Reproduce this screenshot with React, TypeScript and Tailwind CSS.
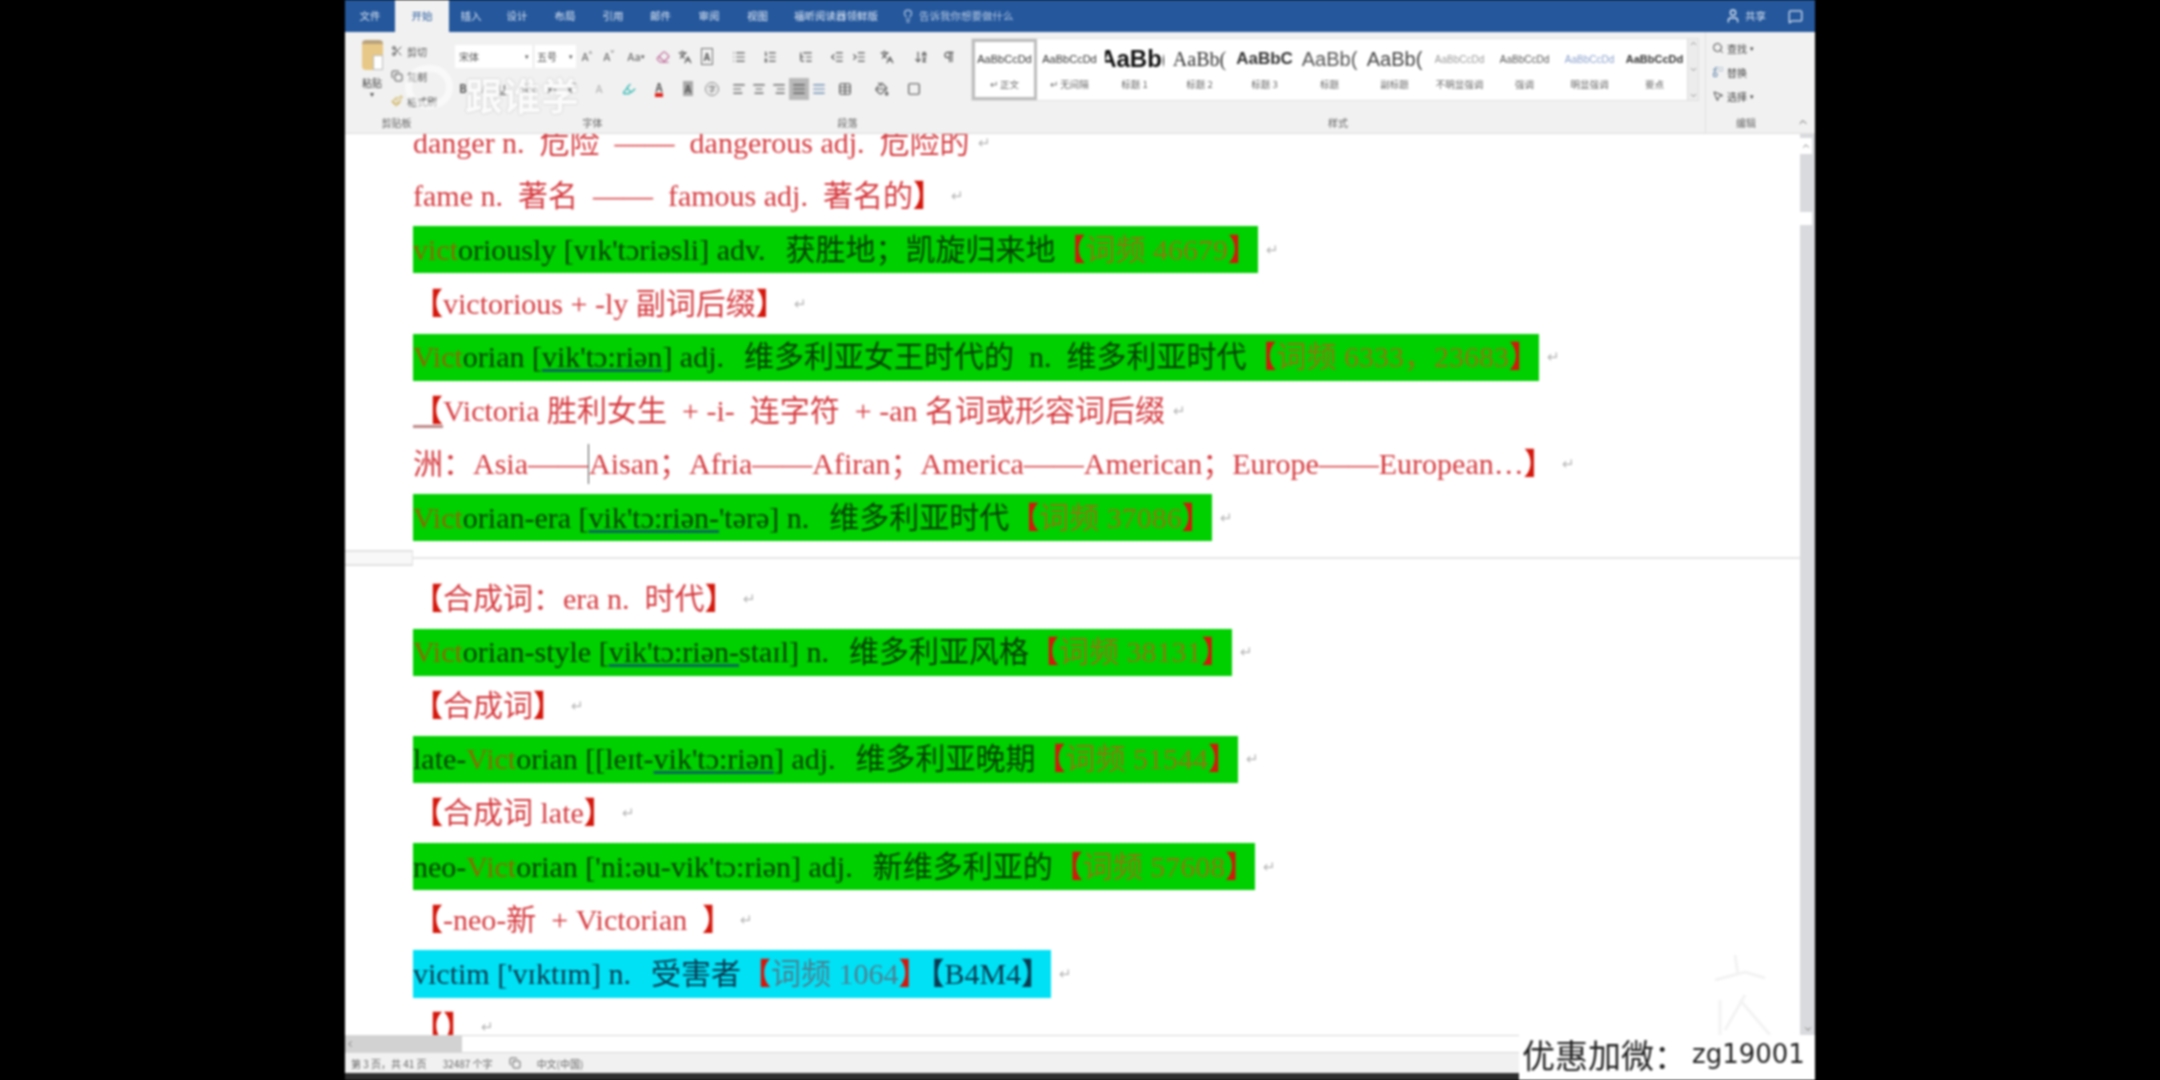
import React from "react";
import { Scissors, Copy, Paintbrush, Search, Lightbulb, User, MessageSquare, ChevronUp, ChevronDown, ChevronLeft, Replace, MousePointer2, List, ListOrdered, ListTree, Indent, Outdent, AlignLeft, AlignCenter, AlignRight, AlignJustify, Table, Languages, ArrowDownAZ, Pilcrow, Highlighter, Eraser, PaintBucket, Square } from "lucide-react";

const Br = ({ c }: { c: string }) => <span className="text-[#d5170c] font-bold">{c}</span>;
const Freq = ({ n, cyan }: { n: string; cyan?: boolean }) => (
  <>
    <Br c="【" />
    <span className={cyan ? "text-[#4d7f92]" : "text-[#8a7c0c]"}>词频 {n}</span>
    <Br c="】" />
  </>
);
const Vict = ({ t }: { t: string }) => <span className="text-[#8d6a00]">{t}</span>;
const Ipa = ({ t }: { t: string }) => <span className="underline decoration-[#0a6a58] underline-offset-2">{t}</span>;
const Mark = () => <span className="text-[#b5b5b5] text-[15px] ml-2">↵</span>;
const Gap = () => <span className="w-[5px] shrink-0" />;

const Row = ({ children }: { children: React.ReactNode }) => (
  <div className="h-[53.6px] shrink-0 flex items-center pl-[68px] whitespace-pre text-[#d63b40]">{children}</div>
);
const Bar = ({ children, cyan }: { children: React.ReactNode; cyan?: boolean }) => (
  <Row>
    <div className={cyan ? "h-[48px] flex items-center bg-[#00e1f5] text-[#0c3a50]" : "h-[47px] flex items-center bg-[#00cf00] text-[#064006]"}>{children}</div>
    <Mark />
  </Row>
);

const tabs = [
  ["文件", "w-[50px]"], ["开始", "w-[54px]"], ["插入", "w-[44px]"], ["设计", "w-[48px]"], ["布局", "w-[48px]"], ["引用", "w-[48px]"],
  ["邮件", "w-[47px]"], ["审阅", "w-[50px]"], ["视图", "w-[47px]"], ["福昕阅读器领鲜版", "w-[110px]"],
];

const styles: [string, string, string][] = [
  ["AaBbCcDd", "text-[11px] text-[#333]", "↵ 正文"],
  ["AaBbCcDd", "text-[11px] text-[#333]", "↵ 无间隔"],
  ["AaBb(", "text-[24px] font-bold text-[#111]", "标题 1"],
  ["AaBb(", "text-[20px] text-[#333] font-['Liberation_Serif',serif]", "标题 2"],
  ["AaBbC", "text-[17px] font-bold text-[#333]", "标题 3"],
  ["AaBb(", "text-[20px] text-[#555]", "标题"],
  ["AaBb(", "text-[20px] text-[#444]", "副标题"],
  ["AaBbCcDd", "text-[10px] text-[#999]", "不明显强调"],
  ["AaBbCcDd", "text-[10px] text-[#555]", "强调"],
  ["AaBbCcDd", "text-[10px] text-[#8aa0cc]", "明显强调"],
  ["AaBbCcDd", "text-[11px] font-bold text-[#333]", "要点"],
];

const GroupLabel = ({ t }: { t: string }) => (
  <div className="h-[22px] flex items-center justify-center text-[10px] text-[#666]">{t}</div>
);
const Slot = ({ children, w = "w-[22px]" }: { children: React.ReactNode; w?: string }) => (
  <div className={`${w} h-[22px] flex items-center justify-center text-[11px] text-[#555] shrink-0`}>{children}</div>
);
const I = 14;

function Ribbon() {
  return (
    <div className="h-[102px] shrink-0 flex bg-[#f1f1f1] border-b border-[#dedede] text-[#555] font-['Noto_Sans_CJK_SC',sans-serif]">
      {/* clipboard */}
      <div className="w-[103px] shrink-0 flex flex-col">
        <div className="flex-1 flex pl-[10px] pt-[8px]">
          <div className="w-[34px] flex flex-col items-center">
            <div className="w-[21px] h-[30px] bg-[#e8c887] rounded-sm border-t-4 border-[#b9a27c] flex items-end justify-end">
              <div className="w-[10px] h-[15px] bg-white border border-[#bbb]" />
            </div>
            <div className="text-[10px] mt-[5px] text-[#444]">粘贴</div>
            <div className="text-[8px] leading-[8px]">▾</div>
          </div>
          <div className="flex flex-col gap-[3px] pl-[2px] text-[10px]">
            <div className="h-[22px] flex items-center gap-1"><Scissors size={12} />剪切</div>
            <div className="h-[22px] flex items-center gap-1"><Copy size={12} />复制</div>
            <div className="h-[22px] flex items-center gap-1"><Paintbrush size={12} className="text-[#c9a53c]" />格式刷</div>
          </div>
        </div>
        <GroupLabel t="剪贴板" />
      </div>
      {/* font */}
      <div className="w-[282px] shrink-0 flex flex-col pl-[7px]">
        <div className="flex-1 pt-[13px] flex flex-col gap-[2px]">
          <div className="flex items-center h-[23px]">
            <div className="w-[78px] h-[23px] bg-white text-[10px] flex items-center justify-between px-[4px]">宋体<span className="text-[7px]">▾</span></div>
            <div className="w-[43px] h-[23px] bg-white border-l border-[#ddd] text-[10px] flex items-center justify-between px-[3px]">五号<span className="text-[7px]">▾</span></div>
            <Slot>A<sup className="text-[7px]">^</sup></Slot>
            <Slot>A<sup className="text-[7px]">ˇ</sup></Slot>
            <Slot w="w-[32px]">Aa<span className="text-[7px]">▾</span></Slot>
            <Slot><Eraser size={I} className="text-[#c06a9a]" /></Slot>
            <Slot><Languages size={I} /></Slot>
            <Slot><span className="border border-[#777] px-[2px] text-[10px] font-bold">A</span></Slot>
          </div>
          <div className="flex items-center h-[23px] pt-[14px]">
            <Slot w="w-[16px]"><b>B</b></Slot>
            <Slot><i>I</i></Slot>
            <Slot w="w-[18px]"><u>U</u></Slot>
            <Slot w="w-[34px]"><s>abc</s></Slot>
            <Slot w="w-[14px]">x₂</Slot>
            <Slot w="w-[26px]">x²</Slot>
            <Slot w="w-[28px]"><span className="text-[#aaa]">A</span></Slot>
            <Slot w="w-[32px]"><Highlighter size={I} className="text-[#1bb3ad]" /></Slot>
            <Slot w="w-[28px]"><span className="font-bold border-b-4 border-[#e0261e] leading-[12px] text-[#555]">A</span></Slot>
            <Slot w="w-[30px]"><span className="bg-[#aaa] px-[2px] text-[10px] font-bold">A</span></Slot>
            <Slot w="w-[18px]"><span className="rounded-full border border-[#888] w-[14px] h-[14px] text-[8px] flex items-center justify-center shrink-0">字</span></Slot>
          </div>
        </div>
        <GroupLabel t="字体" />
      </div>
      {/* paragraph */}
      <div className="w-[235px] shrink-0 flex flex-col">
        <div className="flex-1 pt-[13px] flex flex-col gap-[2px]">
          <div className="flex items-center h-[23px] -ml-[6px]">
            <Slot w="w-[30px]"><List size={I} /></Slot>
            <Slot w="w-[32px]"><ListOrdered size={I} /></Slot>
            <Slot w="w-[40px]"><ListTree size={I} /></Slot>
            <Slot><Outdent size={I} /></Slot>
            <Slot><Indent size={I} /></Slot>
            <Slot w="w-[34px]"><Languages size={I} /></Slot>
            <Slot w="w-[34px]"><ArrowDownAZ size={I} /></Slot>
            <Slot><Pilcrow size={I} /></Slot>
          </div>
          <div className="flex items-center h-[23px] pt-[14px] -ml-[1px]">
            <Slot w="w-[20px]"><AlignLeft size={I} /></Slot>
            <Slot w="w-[20px]"><AlignCenter size={I} /></Slot>
            <Slot w="w-[20px]"><AlignRight size={I} /></Slot>
            <Slot w="w-[20px]"><div className="w-[20px] h-[22px] bg-[#b9b9b9] flex items-center justify-center"><AlignJustify size={I} /></div></Slot>
            <Slot w="w-[20px]"><AlignJustify size={I} className="text-[#5a7fa8]" /></Slot>
            <Slot w="w-[32px]"><Table size={I} /></Slot>
            <Slot w="w-[42px]"><PaintBucket size={I} /></Slot>
            <Slot><Square size={I} /></Slot>
          </div>
        </div>
        <GroupLabel t="段落" />
      </div>
      {/* styles */}
      <div className="w-[740px] shrink-0 flex flex-col pl-[6px]">
        <div className="h-[63px] mt-[6px] w-[728px] bg-white border border-[#e0e0e0] flex">
          {styles.map(([s, cls, l], i) => (
            <div key={i} className={i === 0 ? "w-[65px] shrink-0 border-[3px] border-[#bdbdbd] flex flex-col items-center overflow-hidden" : "w-[65px] shrink-0 border-[3px] border-white flex flex-col items-center overflow-hidden"}>
              <div className={`h-[34px] flex items-center whitespace-nowrap font-['Liberation_Sans',sans-serif] ${cls}`}>{s}</div>
              <div className="text-[9.5px] text-[#666] mt-[1px] whitespace-nowrap">{l}</div>
            </div>
          ))}
          <div className="flex-1 ml-auto border-l border-[#ddd] flex flex-col items-center justify-between text-[#777] bg-[#ececec]">
            <ChevronUp size={9} />
            <ChevronDown size={9} />
            <ChevronDown size={9} />
          </div>
        </div>
        <div className="flex-1 flex items-end"><div className="w-full"><GroupLabel t="样式" /></div></div>
      </div>
      {/* edit */}
      <div className="flex-1 flex flex-col border-l border-[#e0e0e0]">
        <div className="flex-1 pt-[4px] pl-[6px] flex flex-col text-[10px] text-[#444]">
          <div className="h-[24px] flex items-center gap-[3px]"><Search size={12} />查找 <span className="text-[7px]">▾</span></div>
          <div className="h-[24px] flex items-center gap-[3px]"><Replace size={12} className="text-[#5a7fa8]" />替换</div>
          <div className="h-[24px] flex items-center gap-[3px]"><MousePointer2 size={12} />选择 <span className="text-[7px]">▾</span></div>
        </div>
        <div className="h-[22px] flex items-center text-[10px] text-[#666] pl-[30px] justify-between pr-[6px]">编辑<ChevronUp size={12} /></div>
      </div>
    </div>
  );
}

export default function App() {
  return (
    <div className="w-[2160px] h-[1080px] bg-black flex justify-center overflow-hidden">
      <div className="relative w-[1470px] h-[1080px] flex flex-col bg-white blur-[0.9px]">
        {/* title bar */}
        <div className="h-[32px] shrink-0 bg-[#24579c] flex items-stretch text-[10.5px] text-[#dbe5f3] font-['Noto_Sans_CJK_SC',sans-serif]">
          {tabs.map(([t, w]) => (
            <div key={t} className={t === "开始" ? `${w} shrink-0 flex items-center justify-center bg-[#f1f1f1] text-[#24579c]` : `${w} shrink-0 flex items-center justify-center`}>{t}</div>
          ))}
          <div className="flex items-center gap-[4px] pl-[10px] text-[#b5c8e3]"><Lightbulb size={14} />告诉我你想要做什么</div>
          <div className="ml-auto flex items-center gap-[22px] pr-[12px]">
            <div className="flex items-center gap-[4px]"><User size={16} />共享</div>
            <MessageSquare size={15} />
          </div>
        </div>
        <Ribbon />
        {/* document */}
        <div className="flex-1 min-h-0 flex bg-white">
          <div className="flex-1 min-w-0 overflow-hidden font-['Liberation_Serif','Noto_Sans_CJK_SC',serif] text-[30px] leading-[40px]">
            <div className="-mt-[18px] flex flex-col">
              <Row>danger n.  危险  ——  dangerous adj.  危险的<Mark /></Row>
              <Row>fame n.  著名  ——  famous adj.  著名的<Br c="】" /><Mark /></Row>
              <Bar><Vict t="vict" />oriously [vɪk'tɔriəsli] adv.  <Gap />获胜地；凯旋归来地<Freq n="46679" /></Bar>
              <Row><Br c="【" />victorious + -ly 副词后缀<Br c="】" /><Mark /></Row>
              <Bar><Vict t="Vict" />orian [<Ipa t="vik'tɔ:riən" />] adj.  <Gap />维多利亚女王时代的  n.  维多利亚时代<Freq n="6333，23683" /></Bar>
              <Row><span className="underline decoration-[#c08a8a] underline-offset-4"><Br c="【" /></span>Victoria 胜利女生  + -i-  连字符  + -an 名词或形容词后缀<Mark /></Row>
              <Row>洲：Asia——<span className="border-l border-[#555]">Aisan</span>；Afria——Afiran；America——American；Europe——European…<Br c="】" /><Mark /></Row>
              <Bar><Vict t="Vict" />orian-era [<Ipa t="vik'tɔ:riən-" />'tərə] n.  <Gap />维多利亚时代<Freq n="37086" /></Bar>
              <div className="h-[27px] shrink-0 flex items-center">
                <div className="w-[68px] h-[16px] border-y-2 border-r border-[#e2e2e2] bg-[#f8f8f8]" />
                <div className="flex-1 h-[2px] bg-[#e6e6e6]" />
              </div>
              <Row><Br c="【" />合成词：era n.  时代<Br c="】" /><Mark /></Row>
              <Bar><Vict t="Vict" />orian-style [<Ipa t="vik'tɔ:riən-" />staɪl] n.  <Gap />维多利亚风格<Freq n="38131" /></Bar>
              <Row><Br c="【" />合成词<Br c="】" /><Mark /></Row>
              <Bar>late-<Vict t="Vict" />orian [[leɪt-<Ipa t="vik'tɔ:riən" />] adj.  <Gap />维多利亚晚期<Freq n="51544" /></Bar>
              <Row><Br c="【" />合成词 late<Br c="】" /><Mark /></Row>
              <Bar>neo-<Vict t="Vict" />orian ['ni:əu-vik'tɔ:riən] adj.  <Gap />新维多利亚的<Freq n="57608" /></Bar>
              <Row><Br c="【" />-neo-新  + Victorian  <Br c="】" /><Mark /></Row>
              <Bar cyan>victim ['vɪktɪm] n.  <Gap />受害者<Freq n="1064" cyan /><span className="font-bold -ml-[14px]">【</span>B4M4<span className="font-bold">】</span></Bar>
              <Row><Br c="【" /><Br c="】" /><Mark /></Row>
            </div>
          </div>
          {/* vertical scrollbar */}
          <div className="w-[15px] shrink-0 flex flex-col bg-[#d9dadd]">
            <div className="h-[16px] mt-[4px] mr-[3px] bg-white flex items-center justify-center text-[#666]"><ChevronUp size={10} /></div>
            <div className="h-[13px] mt-[58px] mr-[3px] bg-white" />
            <div className="flex-1" />
            <div className="h-[12px] flex items-center justify-center text-[#666]"><ChevronDown size={10} /></div>
          </div>
        </div>
        {/* horizontal scrollbar */}
        <div className="h-[18px] shrink-0 flex bg-white border-t border-[#d8d8d8] border-b">
          <div className="w-[117px] bg-[#d2d2d2] flex items-center text-[#666]"><ChevronLeft size={10} /></div>
        </div>
        {/* status bar */}
        <div className="h-[20px] shrink-0 bg-[#f1f1f1] flex items-center gap-[16px] pl-[6px] text-[10px] text-[#666] font-['Noto_Sans_CJK_SC',sans-serif]">
          <span>第 3 页，共 41 页</span>
          <span>32487 个字</span>
          <Copy size={12} />
          <span>中文(中国)</span>
        </div>
        <div className="h-[7px] shrink-0 bg-[#2e2e2e]" />

        {/* watermarks */}
        <div className="absolute left-[60px] top-[57px] flex items-center gap-[12px] text-white opacity-75 pointer-events-none">
          <div className="w-[48px] h-[44px] rounded-full border-[7px] border-white/70" />
          <span className="text-[38px] font-bold leading-[46px] mt-[14px] font-['Noto_Sans_CJK_SC',sans-serif] [text-shadow:0_0_2px_#999]">跟谁学</span>
        </div>
        <svg className="absolute left-[1355px] top-[950px] pointer-events-none" width="90" height="85" viewBox="0 0 90 85" fill="none" stroke="#f3f3f3" strokeWidth="3">
          <path d="M35 5 L38 25 M15 30 L45 22 L65 28 M20 50 L20 85 M40 50 L70 85 M45 45 L25 80" />
        </svg>
        {/* promo overlay */}
        <div className="absolute right-0 bottom-0 w-[296px] h-[45px] bg-white flex items-center pl-[3px] pb-[6px] whitespace-pre text-[#222] font-['DejaVu_Sans','Noto_Sans_CJK_SC',sans-serif]">
          <span className="text-[33px] font-['Noto_Sans_CJK_SC',sans-serif]">优惠加微：</span>
          <span className="text-[26px] ml-[5px]">zg19001</span>
        </div>
      </div>
    </div>
  );
}
